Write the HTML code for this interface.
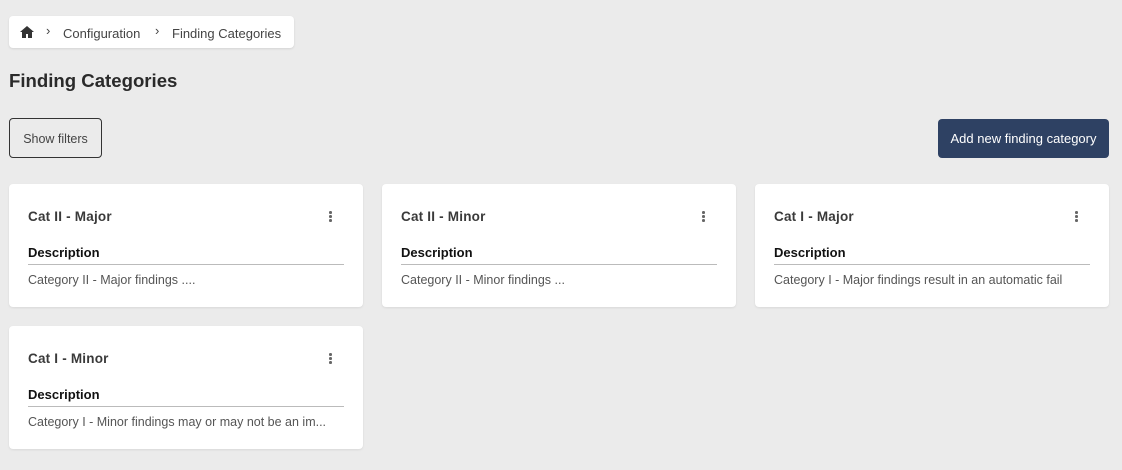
<!DOCTYPE html>
<html><head><style>
*{box-sizing:border-box;margin:0;padding:0}
body{width:1122px;height:470px;background:#ebebeb;font-family:"Liberation Sans",sans-serif;color:#333;position:relative;overflow:hidden}
.bc{position:absolute;left:9px;top:16px;width:285px;height:32px;background:#fff;border-radius:4px;box-shadow:0 1px 2px rgba(0,0,0,.1);font-size:13px;color:#444}
.bc span{position:absolute;top:10px}
h1{position:absolute;left:9px;top:70px;font-size:18.6px;font-weight:bold;color:#2a2a2a}
.sf{position:absolute;left:9px;top:118px;width:93px;height:40px;border:1px solid #333;border-radius:4px;font-size:12.5px;line-height:40px;text-align:center;color:#444;background:#ebebeb}
.add{position:absolute;left:938px;top:119px;width:171px;height:39px;background:#2e4163;border-radius:4px;color:#fff;font-size:13px;line-height:40px;text-align:center}
.card{position:absolute;width:354px;height:123px;background:#fff;border-radius:4px;box-shadow:0 1px 2px rgba(0,0,0,.08)}
.card .t{position:absolute;left:19px;top:25px;font-size:13.5px;color:#3a3a3a;font-weight:bold;letter-spacing:.2px}
.card .m{position:absolute;left:320px;top:27px;width:3px}
.card .m i{display:block;width:2.5px;height:2.5px;background:#666;border-radius:50%;margin-bottom:1.5px}
.card .d{position:absolute;left:19px;top:61px;font-size:13px;font-weight:bold;color:#111}
.card .l{position:absolute;left:19px;right:19px;top:80px;border-top:1px solid #bbb}
.card .x{position:absolute;left:19px;top:89px;font-size:12.5px;color:#555;white-space:nowrap}
</style></head><body>
<div class="bc">
<svg style="position:absolute;left:11px;top:10px" width="14" height="12" viewBox="0 0 14 12"><path d="M7 0L0 6h2v6h4V8h2v4h4V6h2z" fill="#333"/></svg>
<span style="left:37px;top:7px">›</span>
<span style="left:54px">Configuration</span>
<span style="left:146px;top:7px">›</span>
<span style="left:163px">Finding Categories</span>
</div>
<h1>Finding Categories</h1>
<div class="sf">Show filters</div>
<div class="add">Add new finding category</div>
<div class="card" style="left:9px;top:184px"><div class="t">Cat II - Major</div><div class="m"><i></i><i></i><i></i></div><div class="d">Description</div><div class="l"></div><div class="x">Category II - Major findings ....</div></div>
<div class="card" style="left:382px;top:184px"><div class="t">Cat II - Minor</div><div class="m"><i></i><i></i><i></i></div><div class="d">Description</div><div class="l"></div><div class="x">Category II - Minor findings ...</div></div>
<div class="card" style="left:755px;top:184px"><div class="t">Cat I - Major</div><div class="m"><i></i><i></i><i></i></div><div class="d">Description</div><div class="l"></div><div class="x">Category I - Major findings result in an automatic fail</div></div>
<div class="card" style="left:9px;top:326px"><div class="t">Cat I - Minor</div><div class="m"><i></i><i></i><i></i></div><div class="d">Description</div><div class="l"></div><div class="x">Category I - Minor findings may or may not be an im...</div></div>
</body></html>
